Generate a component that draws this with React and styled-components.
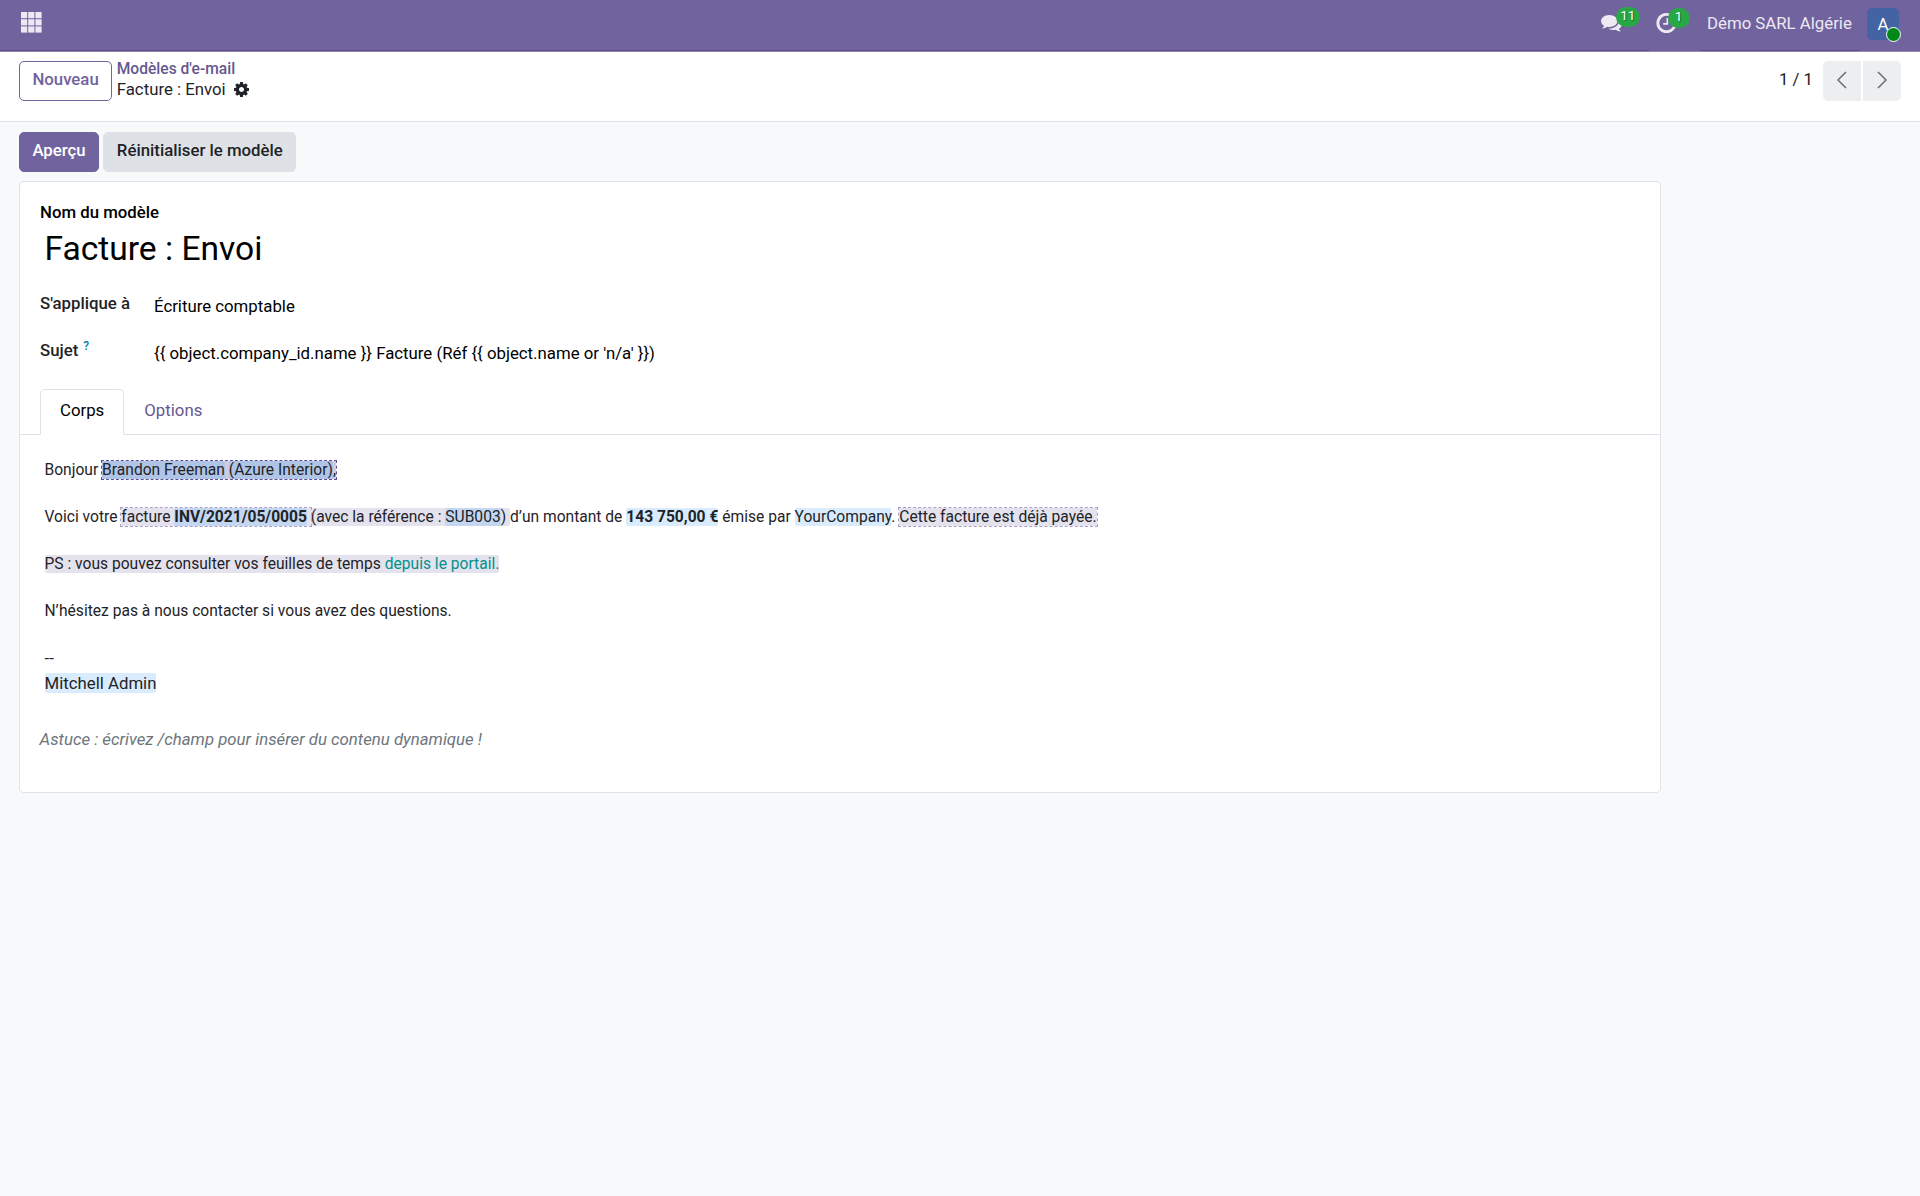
import styled, { createGlobalStyle } from 'styled-components';

const GlobalStyle = createGlobalStyle`
  * {
    box-sizing: border-box;
  }
  body {
    margin: 0;
    background-color: #f8f9fb;
    color: #1f2327;
    font-family: Roboto, "Liberation Sans", sans-serif;
    font-size: 16.8px;
    line-height: 1.25;
  }
  p {
    margin: 0;
  }
`;

const Navbar = styled.header`
  display: flex;
  align-items: flex-start;
  justify-content: space-between;
  height: 52px;
  padding-left: 21.4px;
  background-color: #71639e;
  border-bottom: 1px solid #9188b3;
  box-shadow: inset 0 -1px #5a4f7f;
  color: #ece9f3;
`;

const AppsGrid = styled.svg`
  width: 21px;
  height: 21px;
  margin-top: 12.3px;
  fill: #ece9f3;
`;

const Systray = styled.div`
  display: flex;
  align-items: flex-start;
`;

const TrayItem = styled.div`
  position: relative;
  width: ${(props) => props.$width};
  height: 51px;
  padding-left: ${(props) => props.$pad || 0};
  background-color: ${(props) => (props.$pad ? '#71639e' : 'transparent')};
`;

const TrayIcon = styled.svg`
  display: block;
  width: 21px;
  height: 21px;
  margin-top: 12px;
  fill: #ece9f3;
`;

const Badge = styled.span`
  position: absolute;
  top: ${(props) => props.$top};
  left: ${(props) => props.$left};
  width: ${(props) => props.$width};
  height: 20px;
  border-radius: 10px;
  background-color: #28a745;
  color: #fff;
  font-size: 13.5px;
  line-height: 17px;
  text-align: center;
  text-shadow: 1px 1px 1px rgba(0, 0, 0, 0.4);
`;

const Company = styled.span`
  width: 160px;
  padding-left: 7px;
  line-height: 46px;
  white-space: nowrap;
`;

const UserMenu = styled.div`
  height: 51px;
  padding: 8px 21px 0 7px;
  background-color: #71639e;
`;

const Avatar = styled.div`
  position: relative;
  width: 32px;
  height: 32px;
  border-radius: 5px;
  background-color: #4463a5;
  color: #fff;
  line-height: 32.5px;
  text-align: center;
`;

const Status = styled.span`
  position: absolute;
  top: 19px;
  left: 19px;
  width: 15px;
  height: 15px;
  border: 1px solid #fff;
  border-radius: 50%;
  background-color: #008818;
`;

const ControlPanel = styled.div`
  display: flex;
  align-items: flex-start;
  height: 70px;
  padding: 9px 19px 0;
  background-color: #fff;
  border-bottom: 1px solid #dee2e6;
`;

const Button = styled.button`
  height: 40px;
  padding: 0 12.4px 5px;
  border: 1px solid ${(props) => props.$border || props.$bg};
  border-radius: 5px;
  background-color: ${(props) => props.$bg};
  color: ${(props) => props.$color};
  font-family: inherit;
  font-size: 16.8px;
  font-weight: 500;
  white-space: nowrap;
`;

const Breadcrumb = styled.div`
  display: flex;
  flex-direction: column;
  flex-grow: 1;
  margin-left: 4.6px;
  line-height: 20px;
`;

const BreadcrumbLink = styled.a`
  color: #65588f;
  font-size: 15.6px;
  font-weight: 500;
  margin-top: -2px;
`;

const BreadcrumbCurrent = styled.div`
  display: flex;
  align-items: center;
`;

const CogIcon = styled.svg`
  width: 15px;
  height: 15px;
  margin-left: 8px;
  fill: #1f2327;
`;

const Pager = styled.div`
  display: flex;
  gap: 2px;
`;

const PagerCount = styled.span`
  margin-right: 8px;
  line-height: 37px;
`;

const PagerButton = styled.button`
  display: flex;
  justify-content: center;
  width: 38px;
  height: 40px;
  padding: 8.5px 0 0;
  border: 0;
  border-radius: ${(props) => (props.$last ? '0 5px 5px 0' : '5px 0 0 5px')};
  background-color: #eceef0;
`;

const Actions = styled.div`
  display: flex;
  gap: 4.4px;
  padding: 10px 19px 9px;
`;

const Sheet = styled.main`
  width: 1642px;
  height: 612px;
  margin-left: 19px;
  padding-top: 20px;
  border: 1px solid #dee2e6;
  border-radius: 5px;
  background-color: #fff;
`;

const TitleBlock = styled.div`
  padding: 0 20px;
`;

const Label = styled.label`
  display: block;
  height: 21px;
  color: ${(props) => props.$color || '#1f2327'};
  font-weight: 500;
`;

const Title = styled.h1`
  margin: 3px 0 0 4.4px;
  color: #000;
  font-size: 33.6px;
  font-weight: 400;
  line-height: 46px;
`;

const Fields = styled.div`
  display: grid;
  grid-template-columns: 114px 1fr;
  grid-auto-rows: 47px;
  height: 117px;
  padding: 21px 20px 0;
`;

const Value = styled.span`
  padding-top: 3px;
  color: #000;
`;

const Help = styled.sup`
  margin-left: 5px;
  color: #017e9b;
  font-size: 12px;
  line-height: 0;
  vertical-align: 6px;
`;

const Tabs = styled.div`
  display: flex;
  height: 46px;
  padding-left: 20px;
  border-bottom: 1px solid #dee2e6;
`;

const Tab = styled.a`
  height: 46px;
  padding: 0 19px;
  border: 1px solid ${(props) => (props.$active ? '#dee2e6' : 'transparent')};
  border-bottom-color: ${(props) => (props.$active ? '#fff' : 'transparent')};
  border-radius: 5px 5px 0 0;
  color: ${(props) => (props.$active ? '#000' : '#65588f')};
  line-height: 41px;
`;

const Body = styled.div`
  display: flex;
  flex-direction: column;
  padding: 23px 24.5px 0;
  font-size: 15.6px;
  line-height: 24px;
`;

const Paragraph = styled.p`
  margin-bottom: 23px;
  white-space: pre;
`;

const Block = styled.span`
  border-radius: ${(props) => (props.$outlined ? '0' : '2px')};
  background-color: ${(props) => (props.$selected ? '#d0cbde' : '#e3e2ed')};
  outline: ${(props) => {
    if (!props.$outlined) return 'none';
    return props.$selected ? '1px dashed #5a4f99' : '1px dashed #a9a1cb';
  }};
`;

const Dynamic = styled.span`
  border-radius: 2px;
  background-color: ${(props) => props.$bg || '#d9ecfd'};
  font-weight: ${(props) => (props.$bold ? 700 : 400)};
`;

const PortalLink = styled.a`
  color: #01918c;
`;

const Signature = styled.p`
  font-size: 16.8px;
  line-height: 25px;
`;

const Hint = styled.p`
  margin: 33px 0 0 19.6px;
  color: #6c757d;
  font-style: italic;
`;

const CELLS = [0, 7.2, 14.4];

const COMMENTS_PATH = 'M1408 768q0 139-94 257t-256.5 186.5-353.5 68.5q-86 0-176-16-124 88-278 128-36 9-86 16h-3q-11 0-20.5-8t-11.5-21q-1-3-1-6.5t.5-6.5 2-6l2.5-5 3.5-5.5 4-5 4.5-5 4-4.5q5-6 23-25t26-29.5 22.5-29 25-38.5 20.5-44q-124-72-195-177t-71-224q0-139 94-257t256.5-186.5 353.5-68.5 353.5 68.5 256.5 186.5 94 257zm384 256q0 120-71 224.5t-195 176.5q10 24 20.5 44t25 38.5 22.5 29 26 29.5 23 25q1 1 4 4.5t4.5 5 4 5 3.5 5.5l2.5 5 2 6 .5 6.5-1 6.5q-3 14-13 22t-22 7q-50-7-86-16-154-40-278-128-90 16-176 16-271 0-472-132 58 4 88 4 161 0 309-45t264-129q125-92 192-212t67-254q0-77-23-152 129 71 204 178t75 230z';
const CLOCK_PATH = 'M1024 544v448q0 14-9 23t-23 9h-320q-14 0-23-9t-9-23v-64q0-14 9-23t23-9h224v-352q0-14 9-23t23-9h64q14 0 23 9t9 23zm416 352q0-148-73-273t-198-198-273-73-273 73-198 198-73 273 73 273 198 198 273 73 273-73 198-198 73-273zm224 0q0 209-103 385.5t-279.5 279.5-385.5 103-385.5-103-279.5-279.5-103-385.5 103-385.5 279.5-279.5 385.5-103 385.5 103 279.5 279.5 103 385.5z';
const COG_PATH = 'M1024 896q0-106-75-181t-181-75-181 75-75 181 75 181 181 75 181-75 75-181zm512-109v222q0 12-8 23t-20 13l-185 28q-19 54-39 91 35 50 107 138 10 12 10 25t-9 23q-27 37-99 108t-94 71q-12 0-26-9l-138-108q-44 23-91 38-16 136-29 186-7 28-36 28h-222q-14 0-24.5-8.5t-11.5-21.5l-28-184q-49-16-90-37l-141 107q-10 9-25 9-14 0-25-11-126-114-165-168-7-10-7-23 0-12 8-23 15-21 51-66.5t54-70.5q-27-50-41-99l-183-27q-13-2-21-12.5t-8-23.5v-222q0-12 8-23t19-13l186-28q14-46 39-92-40-57-107-138-10-12-10-24 0-10 9-23 26-36 98.5-107.5t94.5-71.5q13 0 26 10l138 107q44-23 91-38 16-136 29-186 7-28 36-28h222q14 0 24.5 8.5t11.5 21.5l28 184q49 16 90 37l142-107q9-9 24-9 13 0 25 10 129 119 165 170 7 8 7 22 0 12-8 23-15 21-51 66.5t-54 70.5q26 50 41 98l183 28q13 2 21 12.5t8 23.5z';

const Chevron = ({ points }) => (
  <svg width="20" height="20" viewBox="0 0 20 20" fill="none" stroke="#6a6e73" strokeWidth="1.5">
    <polyline points={points} />
  </svg>
);

const TopBar = () => (
  <Navbar>
    <AppsGrid viewBox="0 0 21 21">
      {CELLS.map((y) => CELLS.map((x) => (
        <rect key={`${x}-${y}`} x={x} y={y} width="6.2" height="6.2" />
      )))}
    </AppsGrid>
    <Systray>
      <TrayItem $width="48px">
        <TrayIcon viewBox="0 0 1792 1792"><path d={COMMENTS_PATH} /></TrayIcon>
        <Badge $top="7.4px" $left="15px" $width="23.5px">11</Badge>
      </TrayItem>
      <TrayItem $width="51px" $pad="7px">
        <TrayIcon viewBox="100 60 1592 1592"><path d={CLOCK_PATH} /></TrayIcon>
        <Badge $top="8px" $left="18.6px" $width="22px">1</Badge>
      </TrayItem>
      <Company>Démo SARL Algérie</Company>
      <UserMenu>
        <Avatar>
          A
          <Status />
        </Avatar>
      </UserMenu>
    </Systray>
  </Navbar>
);

const Editor = () => (
  <Body>
    <Paragraph>
      {'Bonjour '}
      <Block $outlined $selected>
        <Dynamic $bg="#b0c5e6">Brandon Freeman</Dynamic>
        {' '}
        <Dynamic $bg="#b0c5e6">(Azure Interior)</Dynamic>
        ,
      </Block>
    </Paragraph>
    <Paragraph>
      {'Voici votre '}
      <Block $outlined>
        {'facture '}
        <Dynamic $bg="#c3d7f0" $bold>INV/2021/05/0005</Dynamic>
        {' '}
      </Block>
      <Block>
        {'(avec la référence : '}
        <Dynamic $bg="#c3d7f0">SUB003</Dynamic>
        {') '}
      </Block>
      {'d’un montant de '}
      <Dynamic $bold>143 750,00 €</Dynamic>
      {' émise par '}
      <Dynamic>YourCompany</Dynamic>
      {'. '}
      <Block $outlined>Cette facture est déjà payée.</Block>
    </Paragraph>
    <Paragraph>
      <Block>
        {'PS : vous pouvez consulter vos feuilles de temps '}
        <PortalLink>depuis le portail.</PortalLink>
      </Block>
    </Paragraph>
    <Paragraph>N’hésitez pas à nous contacter si vous avez des questions.</Paragraph>
    <Signature>--</Signature>
    <Signature><Dynamic>Mitchell Admin</Dynamic></Signature>
  </Body>
);

const App = () => (
  <>
    <GlobalStyle />
    <TopBar />
    <ControlPanel>
      <Button $bg="#fff" $border="#71639e" $color="#71639e">Nouveau</Button>
      <Breadcrumb>
        <BreadcrumbLink>Modèles d&apos;e-mail</BreadcrumbLink>
        <BreadcrumbCurrent>
          Facture : Envoi
          <CogIcon viewBox="0 128 1536 1536"><path d={COG_PATH} /></CogIcon>
        </BreadcrumbCurrent>
      </Breadcrumb>
      <Pager>
        <PagerCount>1 / 1</PagerCount>
        <PagerButton><Chevron points="14,2 6,10 14,18" /></PagerButton>
        <PagerButton $last><Chevron points="6,2 14,10 6,18" /></PagerButton>
      </Pager>
    </ControlPanel>
    <Actions>
      <Button $bg="#71639e" $color="#fff">Aperçu</Button>
      <Button $bg="#dee2e6" $color="#1f2327">Réinitialiser le modèle</Button>
    </Actions>
    <Sheet>
      <TitleBlock>
        <Label $color="#000">Nom du modèle</Label>
        <Title>Facture : Envoi</Title>
      </TitleBlock>
      <Fields>
        <Label>S&apos;applique à</Label>
        <Value>Écriture comptable</Value>
        <Label>
          Sujet
          <Help>?</Help>
        </Label>
        <Value>{"{{ object.company_id.name }} Facture (Réf {{ object.name or 'n/a' }})"}</Value>
      </Fields>
      <Tabs>
        <Tab $active>Corps</Tab>
        <Tab>Options</Tab>
      </Tabs>
      <Editor />
      <Hint>Astuce : écrivez /champ pour insérer du contenu dynamique !</Hint>
    </Sheet>
  </>
);

export default App;
